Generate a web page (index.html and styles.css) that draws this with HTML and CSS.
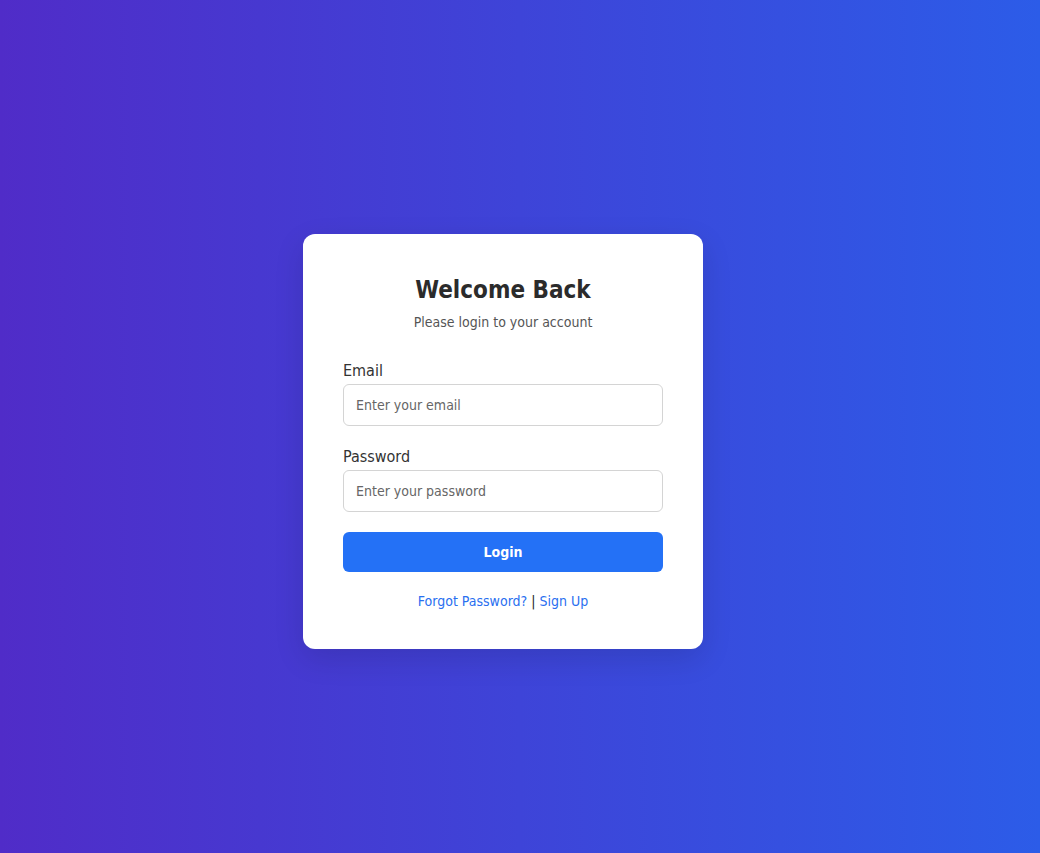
FILE: index.html
```html
<!DOCTYPE html>
<html lang="en">
<head>
<meta charset="utf-8">
<title>Login</title>
<link rel="stylesheet" href="styles.css">
</head>
<body>
  <div class="card">
    <div class="header">
      <h2 class="title">Welcome Back</h2>
      <p class="subtitle">Please login to your account</p>
    </div>
    <form class="form">
      <div class="group">
        <label class="label" for="email">Email</label>
        <input class="input" id="email" type="email" placeholder="Enter your email">
      </div>
      <div class="group">
        <label class="label" for="password">Password</label>
        <input class="input" id="password" type="password" placeholder="Enter your password">
      </div>
      <button class="button" type="button">Login</button>
    </form>
    <p class="links"><a href="#">Forgot Password?</a> | <a href="#">Sign Up</a></p>
  </div>
</body>
</html>
```

FILE: styles.css
```css
* { box-sizing: border-box; }
html, body { height: 100%; }
body {
  margin: 0;
  font-family: "DejaVu Sans Condensed", "DejaVu Sans", Verdana, sans-serif;
  background: linear-gradient(to right, #502cc8, #2c5ce8);
  display: flex;
  align-items: center;
  justify-content: center;
  padding: 30px 34px 0 0;
}
.card {
  width: 400px;
  background: #fff;
  border-radius: 12px;
  padding: 40px 40px 39px;
  box-shadow: 0 10px 30px rgba(0, 0, 0, 0.12);
}
.header { text-align: center; margin-bottom: 28px; }
.title {
  margin: 0;
  padding-top: 2px;
  font-size: 24px;
  line-height: 29px;
  font-weight: bold;
  color: #2b2b2b;
}
.subtitle {
  margin: 7px 0 0;
  font-size: 14px;
  line-height: 20px;
  color: #555;
}
.form { margin: 0; }
.group { margin-bottom: 20px; }
.label {
  display: block;
  font-size: 16px;
  line-height: 21px;
  color: #333;
  margin-bottom: 3px;
}
.input {
  display: block;
  width: 100%;
  height: 42px;
  padding: 0 12px;
  border: 1px solid #d4d4d4;
  border-radius: 6px;
  font-family: inherit;
  font-size: 14px;
  color: #333;
  background: #fff;
}
.input::placeholder { color: #666; }
.button {
  display: block;
  width: 100%;
  height: 40px;
  border: 0;
  border-radius: 6px;
  background: #2471f6;
  color: #fff;
  font-family: inherit;
  font-size: 14px;
  font-weight: bold;
  cursor: pointer;
}
.links {
  margin: 21px 0 0;
  text-align: center;
  font-size: 14px;
  line-height: 17px;
  color: #222;
}
.links a { color: #2a6ff0; text-decoration: none; }
```
